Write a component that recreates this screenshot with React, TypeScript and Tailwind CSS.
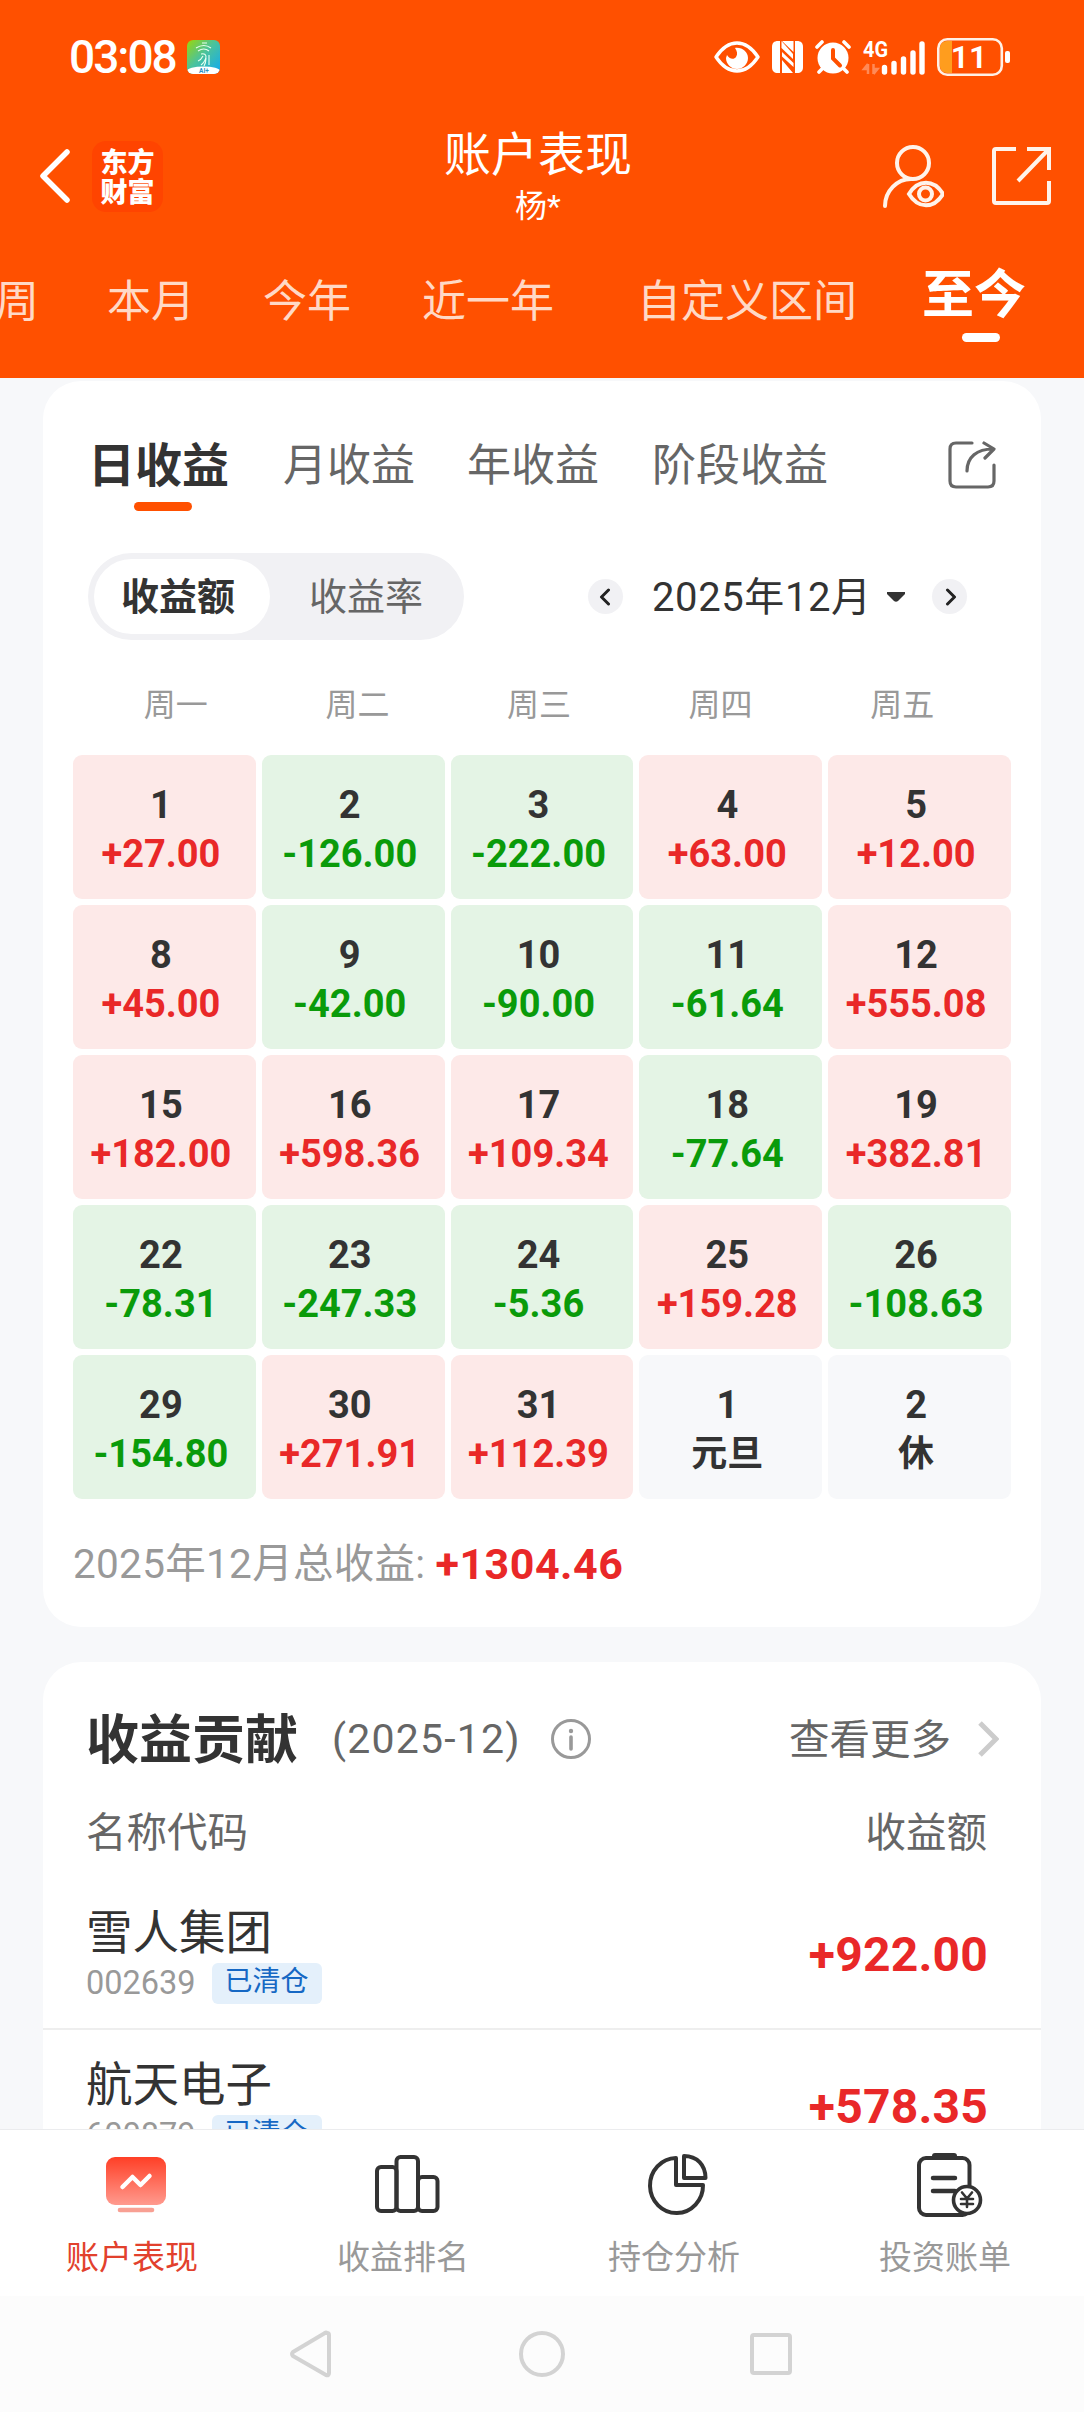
import type { ReactNode } from 'react'
import clsx from 'clsx'

type DayCell = {
  day: number
  amount?: string
  note?: string
}

const periods = [
  { label: '周', className: '-ml-[5px]' },
  { label: '本月', className: 'ml-[68px]' },
  { label: '今年', className: 'ml-[68px]' },
  { label: '近一年', className: 'ml-[71px]' },
  { label: '自定义区间', className: 'ml-[83px]' },
]

const weekdays = ['周一', '周二', '周三', '周四', '周五']

const days: DayCell[] = [
  { day: 1, amount: '+27.00' },
  { day: 2, amount: '-126.00' },
  { day: 3, amount: '-222.00' },
  { day: 4, amount: '+63.00' },
  { day: 5, amount: '+12.00' },
  { day: 8, amount: '+45.00' },
  { day: 9, amount: '-42.00' },
  { day: 10, amount: '-90.00' },
  { day: 11, amount: '-61.64' },
  { day: 12, amount: '+555.08' },
  { day: 15, amount: '+182.00' },
  { day: 16, amount: '+598.36' },
  { day: 17, amount: '+109.34' },
  { day: 18, amount: '-77.64' },
  { day: 19, amount: '+382.81' },
  { day: 22, amount: '-78.31' },
  { day: 23, amount: '-247.33' },
  { day: 24, amount: '-5.36' },
  { day: 25, amount: '+159.28' },
  { day: 26, amount: '-108.63' },
  { day: 29, amount: '-154.80' },
  { day: 30, amount: '+271.91' },
  { day: 31, amount: '+112.39' },
  { day: 1, note: '元旦' },
  { day: 2, note: '休' },
]

const holdings = [
  { name: '雪人集团', code: '002639', amount: '+922.00' },
  { name: '航天电子', code: '600879', amount: '+578.35' },
]

function StatusBar() {
  return (
    <div className="flex h-[114px] items-center pl-[69px] pr-[73px]">
      <span className="w-[107px] whitespace-nowrap text-[46px] font-medium leading-none tracking-[-2px]">03:08</span>
      <svg className="ml-[11px] h-[34px] w-[33px]" viewBox="0 0 33 34" fill="none">
        <defs>
          <linearGradient id="appIcon" x1="0" y1="0" x2="1" y2="1">
            <stop offset="0" stopColor="#9BD60A" />
            <stop offset="0.45" stopColor="#4CC39A" />
            <stop offset="1" stopColor="#0FA8F5" />
          </linearGradient>
          <clipPath id="appClip">
            <rect width="33" height="34" rx="6" />
          </clipPath>
        </defs>
        <g clipPath="url(#appClip)">
          <rect width="33" height="34" fill="url(#appIcon)" />
          <ellipse cx="16.5" cy="31" rx="16.5" ry="4.5" fill="#fff" />
          <path d="M9 8q8-5 15 0M11 11q6-4 11 0M15 3h5M14 14q5-1 5 3-1 5-5 8M16 16q-2 4-5 5M22 15v10M19 18q0 5-2 8" stroke="#E8FFF0" strokeWidth="1.1" />
        </g>
        <text x="17" y="33" fontSize="6.5" fontWeight="700" textAnchor="middle" fill="#2B93C4">AI+</text>
      </svg>

      <svg className="ml-auto h-[32px] w-[46px]" viewBox="0 0 46 32" fill="none">
        <path d="M2 16C8 7 15 2 23 2s15 5 21 14c-6 9-13 14-21 14S8 25 2 16Z" stroke="#fff" strokeWidth="3.4" strokeLinejoin="round" />
        <path d="M21 7c7-1 13 4 13 10s-5 11-11 11-11-5-11-11l1-3c2 4 7 5 9 2 2-3 1-6-1-9Z" fill="#fff" />
      </svg>
      <svg className="ml-[12px] h-[32px] w-[31px]" viewBox="0 0 31 32">
        <path d="M6 0h2v32H6c-4 0-6-2-6-6V6c0-4 2-6 6-6ZM25 32h-2V0h2c4 0 6 2 6 6v20c0 4-2 6-6 6Z" fill="#fff" />
        <path d="M9.500 0 21 13v5L9.500 7ZM10 11l11.500 11v4L10 15.500ZM10 19l11 13H10Z" fill="#fff" />
        <path d="M10 0h11.500v11Z" fill="#fff" />
      </svg>
      <svg className="ml-[12px] h-[34px] w-[36px]" viewBox="0 0 36 34" fill="none">
        <circle cx="18" cy="18" r="15.500" fill="#fff" />
        <path d="m2 7 5-5M34 7l-5-5M8 28l-4 4M28 28l4 4" stroke="#fff" strokeWidth="3.600" strokeLinecap="round" />
        <path d="M18 10v8.500l7 7" stroke="#FF5000" strokeWidth="4" strokeLinecap="round" />
      </svg>
      <svg className="ml-[12px] h-[35px] w-[63px] overflow-visible" viewBox="0 0 63 35">
        <text x="0" y="16.500" fontSize="22" fontWeight="700" textLength="25" lengthAdjust="spacingAndGlyphs" fill="#fff">4G</text>
        <path d="M5 34V24M10.500 24v10M5 24l-4 5h4M10.500 34l4-5h-4" stroke="#FF8A57" strokeWidth="2.500" fill="none" />
        <path d="M21.500 27.500v4.500M31 23.500v8.500M40.500 19v13M50 13v19M59 4v28" stroke="#fff" strokeWidth="5.400" strokeLinecap="round" />
      </svg>
      <svg className="ml-[11px] h-[38px] w-[74px] overflow-visible" viewBox="0 0 74 38">
        <path d="M10 3h5v32h-5c-4 0-7-3-7-7V10c0-4 3-7 7-7Z" fill="#FF9D1E" />
        <rect x="1.300" y="1.300" width="63.500" height="35.400" rx="9" fill="none" stroke="#FFF0E6" strokeWidth="2.600" />
        <rect x="68" y="13" width="5" height="12" rx="2" fill="#fff" />
        <text x="32" y="30" fontSize="32" fontWeight="600" textAnchor="middle" fill="#fff">11</text>
      </svg>
    </div>
  )
}

function TitleBar() {
  return (
    <div className="flex h-[124px] items-center">
      <svg className="ml-[39px] h-[54px] w-[31px]" viewBox="0 0 31 54" fill="none">
        <path d="M28 3 4 27l24 24" stroke="#fff" strokeWidth="5.500" strokeLinecap="round" strokeLinejoin="round" />
      </svg>
      <div className="ml-[22px] flex h-[71px] w-[71px] flex-col items-center justify-center rounded-[14px] bg-[#FF4400] pt-[3px] text-[27px] font-black leading-[30px]">
        <span>东方</span>
        <span>财富</span>
      </div>
      <div className="ml-[281px] flex w-[188px] flex-col items-center pt-[5px]">
        <h1 className="text-[47px] leading-[54px]">账户表现</h1>
        <span className="text-[32px] leading-[48px]">杨*</span>
      </div>
      <svg className="ml-[250px] h-[64px] w-[62px]" viewBox="0 0 62 64" fill="none" stroke="#FFF3EA" strokeWidth="4">
        <circle cx="31" cy="19" r="16" />
        <path d="M3 62c0-15 12-27 26-27" strokeLinecap="round" />
        <path d="M27 50c9-15 25-15 34 0-9 15-25 15-34 0Z" />
        <circle cx="43.500" cy="50" r="6.500" />
      </svg>
      <svg className="ml-[47px] h-[60px] w-[60px]" viewBox="0 0 60 60" fill="none" stroke="#FFF3EA" strokeWidth="4">
        <path d="M25 3H5Q3 3 3 5v50q0 2 2 2h51q2 0 2-2V35" />
        <path d="M36 3h22v21M57 4 27 35" />
      </svg>
    </div>
  )
}

function Header() {
  return (
    <header className="flex h-[378px] shrink-0 flex-col bg-[#FF5000] text-white">
      <StatusBar />
      <TitleBar />
      <nav className="flex h-[128px] items-center whitespace-nowrap text-[44px] text-[#FFD9C6]">
        {periods.map((p) => (
          <span key={p.label} className={p.className}>{p.label}</span>
        ))}
        <span className="relative -top-[6px] ml-[65px] text-[52px] font-bold text-white">
          至今
          <i className="absolute left-[40px] top-[76px] h-[9px] w-[38px] rounded-full bg-white" />
        </span>
      </nav>
    </header>
  )
}

function RoundButton({ className, d }: { className?: string; d: string }) {
  return (
    <button className={clsx('flex size-[35px] items-center justify-center rounded-full bg-[#F1F1F4]', className)}>
      <svg className="size-[18px]" viewBox="0 0 18 18" fill="none" stroke="#222" strokeWidth="3" strokeLinecap="round" strokeLinejoin="round">
        <path d={d} />
      </svg>
    </button>
  )
}

function Day({ day, amount, note }: DayCell) {
  const gain = amount?.startsWith('+')
  return (
    <div
      className={clsx(
        'flex h-[144px] flex-col items-center rounded-[9px] pr-[7px] pt-[26px] text-[38px] font-bold leading-[49px] text-[#333]',
        !amount && 'bg-[#F7F8FA]',
        amount && (gain ? 'bg-[#FDE9E8]' : 'bg-[#E4F4E5]'),
      )}
    >
      <span>{day}</span>
      {amount ? (
        <span className={gain ? 'text-[#E92828]' : 'text-[#0A9B0A]'}>{amount}</span>
      ) : (
        <span className="text-[36px]">{note}</span>
      )}
    </div>
  )
}

function CalendarCard() {
  return (
    <section className="mt-[3px] h-[1246px] shrink-0 rounded-[38px] bg-white">
      <div className="flex h-[172px] items-center pb-[2px] pl-[45px] text-[44px] text-[#666]">
        <span className="relative text-[47px] font-bold text-[#333]">
          日收益
          <i className="absolute left-[46px] top-[71px] h-[9px] w-[58px] rounded-full bg-[#FF5000]" />
        </span>
        <span className="ml-[54px]">月收益</span>
        <span className="ml-[52px]">年收益</span>
        <span className="ml-[53px]">阶段收益</span>
        <svg className="mb-[2px] ml-[119px] h-[50px] w-[49px]" viewBox="0 0 49 50" fill="none" stroke="#666" strokeWidth="3.200" strokeLinecap="round" strokeLinejoin="round">
          <path d="M25 3H9Q3 3 3 9v32q0 6 6 6h32q6 0 6-6V25" />
          <path d="M20 31C20 17 30 9 46 9M37 3l10 6-9 9" />
        </svg>
      </div>

      <div className="flex h-[87px] items-center pl-[45px]">
        <div className="flex h-[87px] w-[376px] items-center rounded-full bg-[#F1F1F4] p-[6px] text-[38px]">
          <span className="flex h-[75px] w-[176px] items-center justify-center rounded-full bg-white pr-[8px] pt-[2px] font-bold text-[#333]">收益额</span>
          <span className="ml-[39px] pt-[2px] text-[#666]">收益率</span>
        </div>
        <RoundButton className="ml-[124px]" d="m11.500 2-7 7 7 7" />
        <span className="ml-[29px] pt-[2px] text-[40px] tracking-[0.600px] text-[#333]">2025年12月</span>
        <svg className="ml-[15px] h-[10px] w-[18px]" viewBox="0 0 18 10">
          <path d="M0 0h18v2l-7 7q-2 1.500-4 0L0 2Z" fill="#333" />
        </svg>
        <RoundButton className="ml-auto mr-[74px]" d="m6.500 2 7 7-7 7" />
      </div>

      <div className="grid h-[115px] grid-cols-5 items-center pl-[42px] pr-[48px] pt-[14px] text-center text-[32px] text-[#999]">
        {weekdays.map((d) => (
          <span key={d}>{d}</span>
        ))}
      </div>

      <div className="grid grid-cols-5 gap-[6px] px-[30px]">
        {days.map((d, i) => (
          <Day key={i} {...d} />
        ))}
      </div>

      <div className="flex h-[128px] items-center pl-[30px] pt-[2px] text-[40.500px] text-[#999]">
        <span className="tracking-[0.300px]">2025年12月总收益:</span>
        <strong className="ml-[10px] text-[43px] tracking-[0.500px] text-[#E92828]">+1304.46</strong>
      </div>
    </section>
  )
}

function ContributionCard() {
  return (
    <section className="mt-[35px] shrink-0 rounded-t-[38px] bg-white pt-[44px]">
      <div className="flex h-[68px] items-center pl-[43px] text-[#666]">
        <h2 className="pt-[3px] text-[53px] font-bold text-[#333]">收益贡献</h2>
        <span className="ml-[34px] text-[41px] tracking-[1.200px]">(2025-12)</span>
        <svg className="mb-[3px] ml-[30px] size-[40px]" viewBox="0 0 40 40" fill="none" stroke="#999" strokeWidth="3">
          <circle cx="20" cy="20" r="18.500" />
          <path d="M20 18v12" strokeWidth="3.600" strokeLinecap="round" />
          <circle cx="20" cy="12" r="2.200" fill="#999" stroke="none" />
        </svg>
        <span className="ml-auto text-[40.500px]">查看更多</span>
        <svg className="mb-[3px] ml-[26px] mr-[42px] h-[36px] w-[22px]" viewBox="0 0 22 36" fill="none">
          <path d="m3 2 16 16L3 34" stroke="#CCC" strokeWidth="5" />
        </svg>
      </div>
      <div className="flex h-[104px] items-center justify-between pl-[43px] pr-[54px] pt-[14px] text-[40.500px] text-[#666]">
        <span>名称代码</span>
        <span>收益额</span>
      </div>
      {holdings.map((h) => (
        <div key={h.code} className="flex h-[152px] items-center justify-between border-b-2 border-[#EEE] pl-[43px] pr-[53px] pt-[3px]">
          <div className="pt-[3px]">
            <div className="text-[46.500px] leading-[50px] text-[#333]">{h.name}</div>
            <div className="mt-[5px] flex h-[41px] items-center">
              <span className="text-[32.500px] text-[#999]">{h.code}</span>
              <span className="ml-[16px] flex h-[41px] w-[110px] items-center justify-center rounded-[6px] bg-[#E4F0FB] pb-[4px] text-[28px] leading-none text-[#1668C4]">已清仓</span>
            </div>
          </div>
          <strong className="text-[48px] tracking-[0.200px] text-[#E92828]">{h.amount}</strong>
        </div>
      ))}
    </section>
  )
}

function NavItem({ label, active, children }: { label: string; active?: boolean; children: ReactNode }) {
  return (
    <div className="flex flex-col items-center">
      <svg className="mt-[19px] h-[70px] w-[72px]" viewBox="0 0 72 70" fill="none" stroke="#333" strokeWidth="4" strokeLinejoin="round" strokeLinecap="round">
        {children}
      </svg>
      <span className={clsx('mr-[7px] mt-[19px] text-[33px] leading-[40px]', active ? 'text-[#E2412D]' : 'text-[#999]')}>{label}</span>
    </div>
  )
}

function BottomNav() {
  return (
    <nav className="grid h-[167px] shrink-0 grid-cols-4 border-t border-[#EBECEE] bg-white">
      <NavItem label="账户表现" active>
        <defs>
          <linearGradient id="screen" x1="0" y1="0" x2="0" y2="1">
            <stop offset="0" stopColor="#FF3F26" />
            <stop offset="1" stopColor="#FF9A8E" />
          </linearGradient>
        </defs>
        <rect x="6" y="8" width="60" height="48" rx="9" fill="url(#screen)" stroke="none" />
        <path d="m22.500 38 10-10 8 8L49.500 27" stroke="#fff" strokeWidth="4.500" />
        <path d="M20 61h32" stroke="#F8A093" strokeWidth="4.600" />
      </NavItem>
      <NavItem label="收益排名">
        <rect x="6" y="18" width="19.500" height="44" rx="4" />
        <rect x="25.500" y="8" width="21.500" height="54" rx="4" />
        <rect x="47" y="28" width="19.500" height="34" rx="4" />
      </NavItem>
      <NavItem label="持仓分析">
        <path d="M34 9v27h27A26.500 27.500 0 1 1 34 9Z" />
        <path d="M42 7v22h21.500C63.500 16 55 7 42 7Z" />
      </NavItem>
      <NavItem label="投资账单">
        <rect x="6" y="9" width="50.500" height="57" rx="7" />
        <path d="M22 7h19" strokeWidth="6" />
        <path d="M20 29h22M20 42h22" strokeWidth="4.500" />
        <circle cx="54" cy="51" r="13.500" fill="#fff" strokeWidth="3.600" />
        <path d="m49 43.500 5 6 5-6M54 50v8M48 50h12M48 55h12" strokeWidth="2.600" />
      </NavItem>
    </nav>
  )
}

function SystemKeys() {
  return (
    <div className="flex h-[116px] shrink-0 items-center bg-[#FCFCFC]">
      <svg className="ml-[289px] h-[50px] w-[43px]" viewBox="0 0 43 50" fill="none" stroke="#D3D3D3" strokeWidth="4" strokeLinejoin="round">
        <path d="M38 4q2 0 2 2v38q0 3-3 2L4 27q-2-2 0-4L36 4q1-1 2 0Z" />
      </svg>
      <i className="ml-[187px] size-[46px] rounded-full border-4 border-[#D3D3D3]" />
      <i className="ml-[185px] size-[42px] rounded-[4px] border-4 border-[#D3D3D3]" />
    </div>
  )
}

export default function App() {
  return (
    <div className="flex h-[2412px] w-[1084px] flex-col overflow-hidden bg-[#F7F8FA] font-['Roboto','Noto_Sans_CJK_SC',sans-serif]">
      <Header />
      <main className="flex min-h-0 flex-1 flex-col overflow-hidden px-[43px]">
        <CalendarCard />
        <ContributionCard />
      </main>
      <BottomNav />
      <SystemKeys />
    </div>
  )
}
